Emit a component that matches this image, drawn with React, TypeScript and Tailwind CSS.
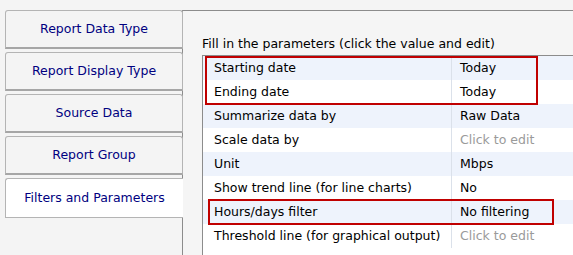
const tabs = [
  'Report Data Type',
  'Report Display Type',
  'Source Data',
  'Report Group',
  'Filters and Parameters',
]

const params: { label: string; value: string; empty?: boolean }[] = [
  { label: 'Starting date', value: 'Today' },
  { label: 'Ending date', value: 'Today' },
  { label: 'Summarize data by', value: 'Raw Data' },
  { label: 'Scale data by', value: 'Click to edit', empty: true },
  { label: 'Unit', value: 'Mbps' },
  { label: 'Show trend line (for line charts)', value: 'No' },
  { label: 'Hours/days filter', value: 'No filtering' },
  { label: 'Threshold line (for graphical output)', value: 'Click to edit', empty: true },
]

export default function App() {
  const active = 4

  return (
    <div
      className="relative flex w-[573px] h-[255px] overflow-hidden bg-[#f4f4f4] pt-[10px] text-[12.5px]"
      style={{ fontFamily: '"DejaVu Sans", Verdana, sans-serif' }}
    >
      {/* Tabs */}
      <div className="flex flex-col gap-[3px] w-[182px] pl-[5px] shrink-0">
        {tabs.map((t, i) => (
          <div
            key={t}
            className={
              i === active
                ? 'relative z-10 flex items-center justify-center w-[178px] h-[40px] bg-white border border-r-0 border-[#b4b4b4] rounded-tl-[3px] text-[#000080]'
                : 'relative z-10 flex items-center justify-center w-[178px] h-[39px] bg-[#f4f4f4] border border-b-2 border-[#b4b4b4] border-b-[#a6a6a6] rounded-t-[3px] text-[#000080]'
            }
          >
            {t}
          </div>
        ))}
      </div>

      {/* Panel */}
      <div className="flex-1 flex flex-col border-l border-t border-[#8c8c8c] bg-[#f5f5f5] pl-[19px] pt-[25px]">
        <div className="leading-[16px] mb-[3px] text-black whitespace-nowrap">
          Fill in the parameters (click the value and edit)
        </div>
        <div className="flex-1 border-l border-t border-[#8c8c8c] bg-white">
          {params.map((p, i) => (
            <div
              key={p.label}
              className={`flex h-[24px] leading-[24px] ${i % 2 === 0 ? 'bg-[#eef3fc]' : 'bg-white'}`}
            >
              <div className="w-[248px] pl-[11px] text-black whitespace-nowrap shrink-0">{p.label}</div>
              <div
                className={`flex-1 border-l border-[#dbe1ea] pl-[8px] whitespace-nowrap ${
                  p.empty ? 'text-[#9a9a9a]' : 'text-black'
                }`}
              >
                {p.value}
              </div>
            </div>
          ))}
        </div>
      </div>

      {/* Annotation boxes */}
      <div className="absolute left-[205px] top-[56px] w-[333px] h-[49px] border-2 border-[#c00000]" />
      <div className="absolute left-[208px] top-[199px] w-[346px] h-[26px] border-2 border-[#c00000]" />
    </div>
  )
}
